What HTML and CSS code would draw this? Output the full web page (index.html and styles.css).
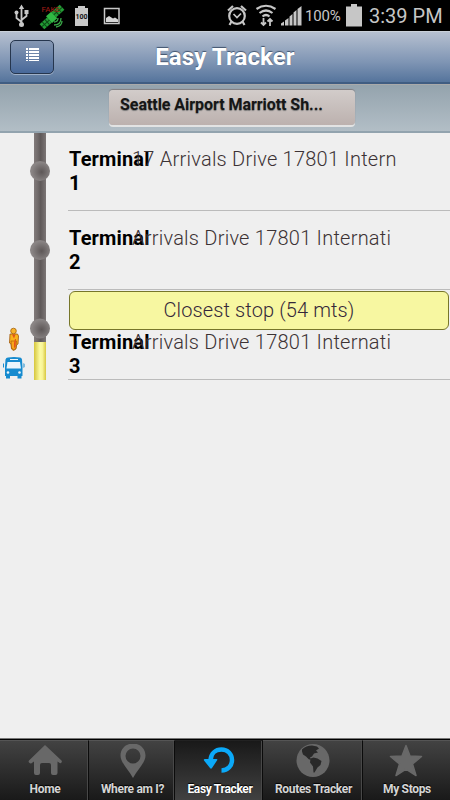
FILE: index.html
```html
<!DOCTYPE html>
<html lang="en">
<head>
  <meta charset="UTF-8">
  <meta name="viewport" content="width=device-width, initial-scale=1">
  <title>Easy Tracker</title>
  <link rel="stylesheet" href="styles.css">
</head>
<body>

<div class="status-bar">
  <!-- usb, gps, battery level, picture -->
  <svg class="status-left" width="125" height="31" viewBox="0 0 125 31">
    <g fill="none" stroke="#c8c8c8" stroke-width="1.8">
      <path d="M21.5 8v15M21.5 22l-5-4v-4M21.5 20l5-4v-3"/>
    </g>
    <g fill="#c8c8c8">
      <path d="M21.5 4.500l2.700 4.500h-5.400z"/>
      <circle cx="21.500" cy="24.500" r="2.500"/>
      <circle cx="16.500" cy="12.500" r="2"/>
      <path d="M24.500 10h4v4h-4zM75 8h3V6h7v2h3v18H75z"/>
    </g>
    <g transform="rotate(-42 52 17)">
      <path fill="#239b35" d="M38 14h10v7h-10zM55 13h11v7h-11z"/>
      <path fill="#30b943" d="M48 12.500h7v9h-7z"/>
      <path stroke="#0b4a16" d="M41.500 14v7M45 14v7M58.500 13v7M62 13v7M38 17.500h10M55 16.500h11" fill="none"/>
    </g>
    <path fill="none" stroke="#39a747" stroke-width="1.300" d="M54 22q4 0 4-4M54 25q7 0 7-7M56 27q6-1 6-6"/>
    <text class="fake" x="41.500" y="12">FAKE</text>
    <text class="level" x="75.500" y="19">100</text>
    <path fill="none" stroke="#c8c8c8" stroke-width="1.500" d="M104.500 8.500h14.500v15h-14.500z"/>
    <path fill="#d5d5d5" d="M106 22v-4l3-2 4 2.500 2-1 3 2V22z"/>
  </svg>
  <div class="status-right">
    <!-- alarm, wifi, signal -->
    <svg width="75" height="31" viewBox="0 0 75 31">
      <g fill="none" stroke="#c6c6c6" stroke-width="2.200">
        <circle cx="10" cy="16" r="7.800"/>
        <path d="M1 10.500l5-4.500M19 10.500L14 6M4.500 21.500l-2 3.500M15.500 21.500l2 3.500"/>
        <path stroke-width="1.700" d="M6.500 14l3.500 3.500 4-4"/>
        <path d="M29.500 9q9.500-6.500 19 0M32.500 13q6.500-5 13 0M35.500 16.500q3.500-3 7 0"/>
        <path stroke-width="1.800" d="M36.500 18v7M34 22.500l2.500 2.500 2.500-2.500M43 26v-7M40.500 21.500L43 19l2.500 2.500"/>
      </g>
      <path fill="#c6c6c6" d="M54 25.500v-2l3-2v4zM58 25.500V20.500l3.500-2.500v7.500zM62.500 25.500v-9l3-2.500v11.500zM66.500 25.500V12.500l3-2.500v15.500zM70.500 25.500V9l4-3v19.500z"/>
    </svg>
    <span class="percent">100%</span>
    <svg class="battery" width="16" height="31" viewBox="0 0 16 31">
      <path fill="#c6c6c6" d="M0 6.500h5V4h6v2.500h5v20H0z"/>
    </svg>
    <span class="clock">3:39 PM</span>
  </div>
</div>

<div class="header">
  <button class="menu-btn" aria-label="Menu">
    <svg width="13" height="14" viewBox="0 0 13 14">
      <path fill="#fff" d="M0 0h2v2H0zM3 0h10v2H3zM0 3h2v2H0zM3 3h10v2H3zM0 6h2v2H0zM3 6h10v2H3zM0 9h2v2H0zM3 9h10v2H3zM0 12h2v1H0zM3 12h10v1H3z"/>
    </svg>
  </button>
  <h1>Easy Tracker</h1>
</div>

<div class="route-bar">
  <div class="route-select"><span>Seattle Airport Marriott Sh...</span></div>
</div>

<div class="content">
  <svg class="track" width="68" height="247" viewBox="0 0 68 247">
    <defs>
      <linearGradient id="road">
        <stop offset="0" stop-color="#817a7a"/>
        <stop offset=".3" stop-color="#716b6b"/>
        <stop offset=".55" stop-color="#5f5959"/>
        <stop offset="1" stop-color="#7c7676"/>
      </linearGradient>
      <linearGradient id="done">
        <stop offset="0" stop-color="#d6c63d"/>
        <stop offset=".5" stop-color="#fcfca2"/>
        <stop offset=".7" stop-color="#f8f498"/>
        <stop offset="1" stop-color="#d8c840"/>
      </linearGradient>
      <radialGradient id="knob" cx=".58" cy=".55">
        <stop offset="0" stop-color="#5d5757"/>
        <stop offset="1" stop-color="#8a8585"/>
      </radialGradient>
    </defs>
    <path fill="url(#road)" d="M34 0h12v209H34z"/>
    <path fill="url(#done)" d="M34 209h12v38H34z"/>
    <g fill="url(#knob)">
      <circle cx="40" cy="38" r="10"/>
      <circle cx="40" cy="117" r="10"/>
      <circle cx="40" cy="195.500" r="10"/>
    </g>
    <!-- person -->
    <path fill="#f9b21b" stroke="#a0560a" stroke-width=".8" d="M10 201h7.500l1 2-.5 8-1.500 1-.5 4-2.500 1.500-2-1.500-.500-5-1.500-1z"/>
    <path fill="#f9a51b" stroke="#a0560a" stroke-width=".6" d="M11 208h5.500l-.5 7-2 1.800-2.500-1.800z"/>
    <path fill="#e4541b" d="M12 201.500l2 4 1.500-4zM15 206h1l-.5 8-1.500 1v-5z"/>
    <circle cx="13.500" cy="198" r="2.800" fill="#f8b42a" stroke="#a35f0b" stroke-width=".8"/>
    <!-- bus -->
    <path fill="#168bcf" d="M8 224.500q6-1 12 0 1.500 0 2 2l.5 7.500v9h-1v2.500h-4v-2.500h-7.500v2.500h-4v-2.500h-1v-9l.5-7.500q.5-2 2.500-2zM4 230v5l-1-1v-3zM23.500 230v5l1-1v-3z"/>
    <path fill="#e9f5fc" d="M10 226h8v1h-8zM7.500 229h12.500l1 6.500h-14.500z"/>
    <circle cx="8" cy="239.500" r="1.300" fill="#e9f5fc"/>
    <circle cx="19.500" cy="239.500" r="1.300" fill="#e9f5fc"/>
  </svg>

  <div class="stops">
    <div class="stop">
      <div class="stop-info">
        <div class="name">Terminal 1</div>
        <div class="address">17 Arrivals Drive 17801 Intern</div>
      </div>
    </div>
    <div class="stop">
      <div class="stop-info">
        <div class="name">Terminal 2</div>
        <div class="address">Arrivals Drive 17801 Internati</div>
      </div>
    </div>
    <div class="stop closest">
      <div class="notice">Closest stop (54 mts)</div>
      <div class="stop-info">
        <div class="name">Terminal 3</div>
        <div class="address">Arrivals Drive 17801 Internati</div>
      </div>
    </div>
  </div>
</div>

<div class="tabs">
  <div class="tab">
    <svg width="36" height="36" viewBox="0 0 36 36">
      <path fill="#686868" d="M18 1L34.500 16.500q1 1.500-.5 2.500-1 .5-2-.5l-1.500-1V29q0 2-2 2H26q-2 0-2-2v-8q0-2-2-2h-7q-2 0-2 2v8q0 2-2 2H9q-2 0-2-2V17.500l-1.500 1q-1.500 1.500-3 .5-1.500-1-.500-2.500z"/>
    </svg>
    <span>Home</span>
  </div>
  <div class="tab">
    <svg width="36" height="36" viewBox="0 0 36 36">
      <path fill="#686868" fill-rule="evenodd" d="M18-.5C11-.5 5.500 4.500 5.500 11.500c0 7 7 12.500 12.500 22.500 5.500-10 12.500-15.500 12.500-22.500C30.500 4.500 25-.5 18-.5zm0 5a7.500 7.500 0 1 1 0 15 7.500 7.500 0 0 1 0-15z"/>
    </svg>
    <span>Where am I?</span>
  </div>
  <div class="tab active">
    <svg width="36" height="36" viewBox="0 0 36 36">
      <path fill="none" stroke="#0ba9f8" stroke-width="4.500" d="M8.500 16C9 9.500 13.500 5.500 19.500 5.500c6 0 10.500 4.500 10.500 10.500 0 5.500-4 10.500-10.500 10.500"/>
      <path fill="#0ba9f8" d="M3 15h11.500q1.500 0 .500 1.500l-5 7.500q-1 1.500-2 0L2 16.500q-.8-1.500 1-1.500z"/>
    </svg>
    <span>Easy Tracker</span>
  </div>
  <div class="tab">
    <svg width="36" height="36" viewBox="0 0 36 36">
      <circle cx="17" cy="16.500" r="16.500" fill="#686868"/>
      <path fill="#292929" d="M6 5.500q4-4 10-4l5 1 2 2-3 2 2 2-4 1-2 3 -2 1 1 2h-2l-3-3-3-2-1-3zM14.500 14.500l3-1 4 1 4 2.500-1 4-3 2.500-3 5h-1l-.5-6-3-4z"/>
    </svg>
    <span>Routes Tracker</span>
  </div>
  <div class="tab">
    <svg width="36" height="36" viewBox="0 0 36 36">
      <path fill="#686868" stroke="#686868" stroke-width="1.500" stroke-linejoin="round" d="M17 1.500l4 10.500 11.500.5-9 7.500L27 31.500l-10-6.500L7 31.500l3.500-11.500-9-7.500L13 12z"/>
    </svg>
    <span>My Stops</span>
  </div>
</div>

</body>
</html>
```
FILE: styles.css
```css
* {
  box-sizing: border-box;
}

body {
  margin: 0;
  height: 800px;
  display: flex;
  flex-direction: column;
  overflow: hidden;
  background: #efefef;
  font-family: Roboto, "Liberation Sans", sans-serif;
}

svg {
  display: block;
  flex: none;
}

/* status bar */
.status-bar {
  height: 31px;
  flex: none;
  display: flex;
  justify-content: space-between;
  background: #000;
  color: #c6c6c6;
}

.fake {
  font-size: 8px;
  fill: #a51d17;
}

.level {
  font-size: 7px;
  font-weight: bold;
  fill: #111;
}

.status-right {
  width: 223px;
  display: flex;
  line-height: 31px;
  white-space: nowrap;
}

.percent {
  width: 41px;
  padding-left: 3px;
  padding-top: 1px;
  font-size: 15px;
  letter-spacing: -0.2px;
}

.battery {
  margin-left: 3px;
}

.clock {
  margin-left: 7px;
  padding-top: 1px;
  font-size: 20px;
}

/* header */
.header {
  height: 53px;
  flex: none;
  display: grid;
  grid-template-columns: 64px 1fr 64px;
  align-items: center;
  border-top: 1px solid #c9d0d9;
  border-bottom: 2px solid #405d82;
  background: linear-gradient(#b6c0d0, #7f95b4 60%, #55749c);
}

.header h1 {
  margin: 0;
  color: #fff;
  font-size: 24px;
  line-height: 30px;
  letter-spacing: 0.1px;
  text-align: center;
  text-shadow: 0 -1px 1px #42546e;
}

.menu-btn {
  width: 44px;
  height: 34px;
  margin-left: 10px;
  margin-top: 0;
  padding: 0 0 4px;
  display: flex;
  align-items: center;
  justify-content: center;
  border: 1px solid #26364e;
  border-radius: 5px;
  background: linear-gradient(#8799b4, #48699a);
  box-shadow: 0 1px 0 #9fb0c8;
}

.route-bar {
  height: 49px;
  flex: none;
  padding: 5px 0 0 109px;
  border-top: 1px solid #aaa;
  border-bottom: 2px solid #92a3ae;
  background: linear-gradient(#94a3ad, #b2bec6);
}

.route-select {
  width: 246px;
  height: 35px;
  padding-left: 11px;
  border-radius: 4px;
  background: linear-gradient(#d2ccca, #bcb1ae);
  box-shadow: 0 -1px 1px #817e80, 0 2px 0 #e2e3e3;
  color: #161616;
  font-size: 16px;
  font-weight: bold;
  line-height: 30px;
  letter-spacing: -0.05px;
  white-space: nowrap;
  text-shadow: 0 1px 1px #777;
}

/* stop list */
.content {
  flex: 1;
  display: flex;
  align-items: flex-start;
}

.stops {
  flex: 1;
  min-width: 0;
}

.stop {
  height: 79px;
  padding: 15px 0 0 1px;
  border-bottom: 1px solid #bbb;
}

.stop:first-child {
  height: 78px;
  padding-top: 14px;
}

.stop.closest {
  height: 90px;
  padding-top: 1px;
}

.stop-info {
  display: flex;
  font-size: 20px;
  line-height: 24px;
}

/* narrow column, long names run under the address */
.name {
  width: 63px;
  flex: none;
  color: #000;
  font-weight: bold;
  letter-spacing: 0.15px;
}

.address {
  color: #3c3234;
  font-weight: 300;
  letter-spacing: 0.24px;
  white-space: nowrap;
}

.notice {
  height: 39px;
  margin-right: 1px;
  border: 1px solid #77762a;
  border-radius: 6px;
  background: #f7f7a1;
  color: #342739;
  font-size: 20px;
  font-weight: 300;
  line-height: 37px;
  letter-spacing: 0.12px;
  text-align: center;
}

/* bottom tabs */
.tabs {
  height: 61px;
  flex: none;
  display: grid;
  grid-template-columns: 89px 86px 88px 100px 87px;
  border-top: 1px solid #000;
  box-shadow: 0 -1px 0 #777;
  background: linear-gradient(#434343, #191919);
}

.tab {
  padding: 3px 0 0 2px;
  display: flex;
  flex-direction: column;
  align-items: center;
  border-top: 1px solid #555;
  border-right: 1px solid #0b0b0b;
  box-shadow: inset -1px 0 0 #484848;
  color: #d5d5d5;
  font-size: 12px;
  font-weight: bold;
  line-height: 16px;
  letter-spacing: -0.33px;
  white-space: nowrap;
  text-shadow: 0 -1px 1px #000;
}

.tab:last-child {
  padding-left: 1px;
  border-right: none;
  box-shadow: none;
}

.tab span {
  margin-top: 1px;
}

.tab.active {
  padding-left: 3px;
  border-top-color: #222;
  background: linear-gradient(#191919, #414141);
  color: #fff;
}
```
